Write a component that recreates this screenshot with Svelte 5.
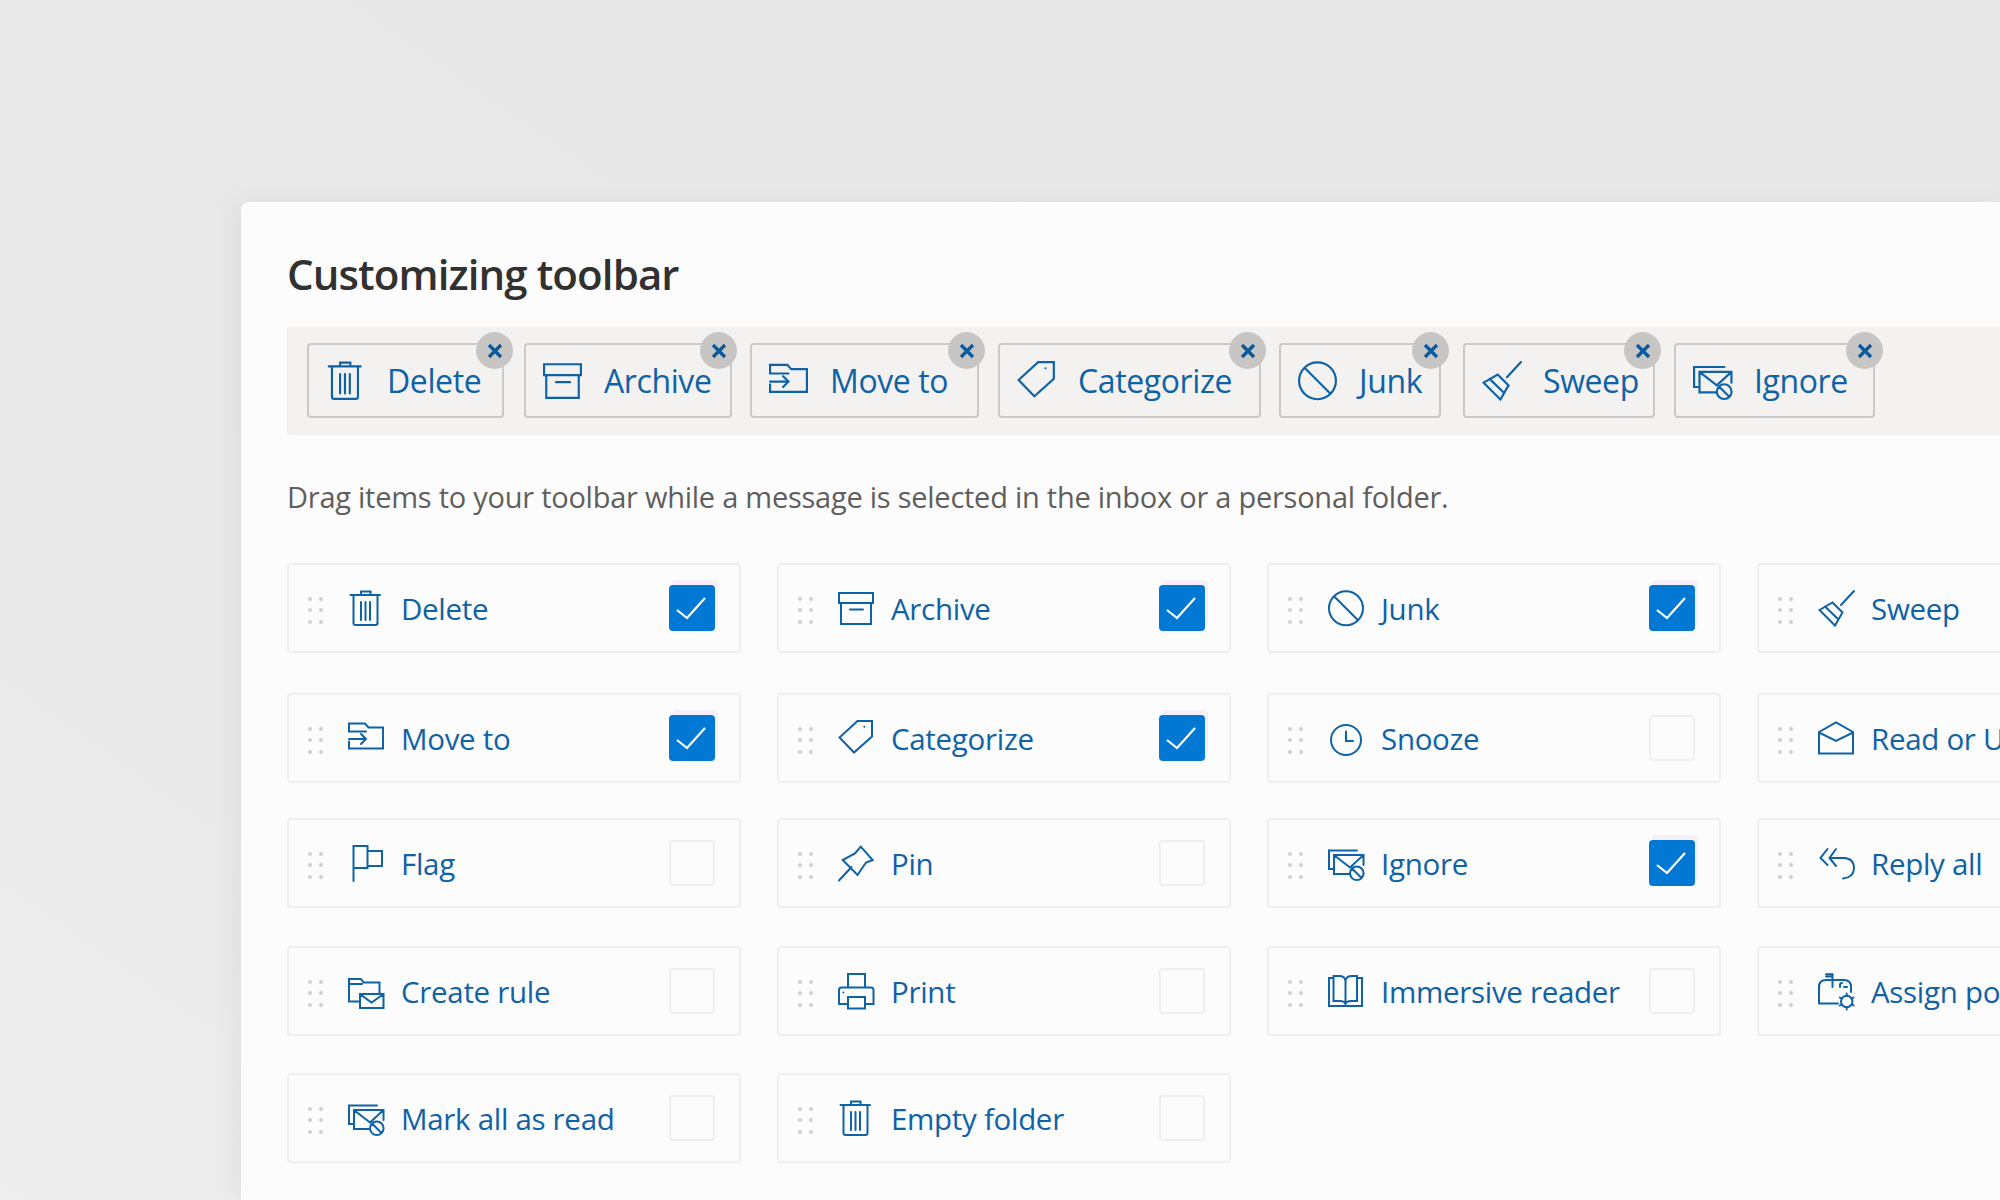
<script lang="ts">
    // all icons are drawn on a 36x36 box, stroke only
    const icons = {
        trash: 'M2.5 5H32M13 5V1.5H22.5V5M5.5 5V33Q5.5 35 7.5 35H27.5Q29.5 35 29.5 33V5M13 12V30M17.5 12V30M22 12V30',
        archive: 'M1 3H35V13H1ZM3 13V34H33V13M12 19.5H25',
        move: 'M1 21.5V28.5H35V7.5H20.5L17 3.5H1V11.5H18M1 19H18M13 14L18 19L13 24',
        tag: 'M16 32.5L1.5 17.5L19.5 1H34V16.5ZM26.3 6.8h.01',
        junk: 'M1 18.3A17 17 0 1 0 35 18.3A17 17 0 1 0 1 18.3ZM6 6.3L30 30.3',
        sweep: 'M36 1L23 15M1.5 20L14.5 12.5L24.5 22.5L17 35.5ZM7 16.5L20.5 29.5',
        ignore: 'M29 5.5H1V24H5M21 29H6V10H35.5V20M6.5 10.5L22 22.5L35 10.5M22 28.3A6.8 6.8 0 1 0 35.6 28.3A6.8 6.8 0 1 0 22 28.3ZM24 23.5L33.5 33',
        clock: 'M3 20A15 15 0 1 0 33 20A15 15 0 1 0 3 20ZM18 11.5V21H25',
        read: 'M1 12L18 2.5L35 12V33.5H1ZM1 12.5L18 21L35 12.5',
        flag: 'M5.5 36V1H19.5V23H5.5M19.5 6H34V21H19.5',
        pin: 'M1 35.5L13.5 22M22.7 1.7L34.7 15L28 17.5L19.5 30L4.7 15L17 8.5Z',
        reply: 'M9.5 4L2.5 13L9.5 20M18 4L11.5 13L18 21M11.5 13H26Q36 13.5 36 23.5Q35.5 32.5 25 33.5',
        rule: 'M12 28.5H1V6H13L15.5 9.5H31.5V21M1 11H14M12 21H35.5V35H12ZM12.5 21.5L23.5 29.5L35 21.5',
        print: 'M10 14V1H27V14M1 31V17Q1 14.5 3.5 14.5H33Q35.5 14.5 35.5 17V31H27M10 31H1M10 24H27V35.5H10ZM5.3 19.5h.01',
        book: 'M5 5H1V33H34V5H29.5M17.5 8Q18 3 24 3H29V28H23Q18.5 28 17.5 31Q16.5 28 12 28H5.5V3H11Q17 3 17.5 8V31',
        policy: 'M8 1.2H14M8 3.6H14M14.5 1V14M1 30V14Q1 7 8 7H26Q33 7 33 14V19M1 30.5H20M22 14V12Q22 10 24 10H24M26 14H29M23 28.5A5.7 5.7 0 1 0 34.4 28.5A5.7 5.7 0 1 0 23 28.5ZM28.7 20.5V23M28.7 34V36.5M21.8 24.5L24 25.8M33.4 31.2L35.6 32.5M21.8 32.5L24 31.2M33.4 25.8L35.6 24.5'
    };

    // left and gap values vary a little per chip in the design
    const toolbar = [
        { label: 'Delete', icon: 'trash', width: 197, gap: 20, badge: 11 },
        { label: 'Archive', icon: 'archive', width: 208, gap: 18, badge: 7 },
        { label: 'Move to', icon: 'move', width: 229, gap: 19, badge: 8 },
        { label: 'Categorize', icon: 'tag', width: 263, gap: 18, badge: 7 },
        { label: 'Junk', icon: 'junk', width: 162, gap: 22, badge: 10 },
        { label: 'Sweep', icon: 'sweep', width: 192, gap: 19, badge: 8 },
        { label: 'Ignore', icon: 'ignore', width: 201, gap: 0, badge: 10 }
    ];

    const items = [
        { label: 'Delete', icon: 'trash', on: true },
        { label: 'Archive', icon: 'archive', on: true },
        { label: 'Junk', icon: 'junk', on: true },
        { label: 'Sweep', icon: 'sweep', on: false },
        { label: 'Move to', icon: 'move', on: true },
        { label: 'Categorize', icon: 'tag', on: true },
        { label: 'Snooze', icon: 'clock', on: false },
        { label: 'Read or Unread', icon: 'read', on: false },
        { label: 'Flag', icon: 'flag', on: false },
        { label: 'Pin', icon: 'pin', on: false },
        { label: 'Ignore', icon: 'ignore', on: true },
        { label: 'Reply all', icon: 'reply', on: false },
        { label: 'Create rule', icon: 'rule', on: false },
        { label: 'Print', icon: 'print', on: false },
        { label: 'Immersive reader', icon: 'book', on: false },
        { label: 'Assign policy', icon: 'policy', on: false },
        { label: 'Mark all as read', icon: 'ignore', on: false },
        { label: 'Empty folder', icon: 'trash', on: false }
    ];
</script>

<div class="page">
    <section class="panel">
        <h1>Customizing toolbar</h1>

        <div class="toolbar">
            {#each toolbar as chip}
                <div class="chip" style="width: {chip.width}px; margin-right: {chip.gap}px;">
                    <svg class="icon chip-icon" viewBox="0 0 36 36"><path d={icons[chip.icon]} /></svg>
                    <span>{chip.label}</span>
                    <span class="remove" style="right: {-chip.badge}px;">
                        <svg viewBox="0 0 16 16"><path d="M2 2L14 14M14 2L2 14" /></svg>
                    </span>
                </div>
            {/each}
        </div>

        <p class="hint">Drag items to your toolbar while a message is selected in the inbox or a personal folder.</p>

        <div class="grid">
            {#each items as item}
                <div class="card">
                    <div class="grip">
                        {#each Array(6) as _}<i></i>{/each}
                    </div>
                    <svg class="icon" viewBox="0 0 36 36"><path d={icons[item.icon]} /></svg>
                    <span class="name">{item.label}</span>
                    <span class="box" class:on={item.on}>
                        {#if item.on}
                            <svg viewBox="0 0 46 46"><path d="M8 25L18 33L36 13" /></svg>
                        {/if}
                    </span>
                </div>
            {/each}
        </div>
    </section>
</div>

<style>
    :global(body) {
        margin: 0;
        background: #e9e9e9;
        overflow: hidden;
    }

    .page {
        width: 2000px;
        height: 1200px;
        padding: 202px 0 0 241px;
        box-sizing: border-box;
        overflow: hidden;
        background: linear-gradient(35deg, #eeeeee 0, #e9e9e9 22%, #e8e8e8 100%);
        font-family: "Open Sans", "Noto Sans", sans-serif;
    }

    .panel {
        height: 998px;
        padding-left: 46px;
        background: #fcfcfc;
        border-top-left-radius: 8px;
        box-shadow: -6px 0 24px rgba(0, 0, 0, 0.05);
        overflow: hidden;
    }

    h1 {
        margin: 0;
        height: 125px;
        padding-top: 46px;
        box-sizing: border-box;
        font-size: 42px;
        line-height: 52px;
        font-weight: 600;
        letter-spacing: -0.9px;
        color: #323130;
    }

    .toolbar {
        display: flex;
        width: 1713px;
        height: 108px;
        padding: 16px 0 0 20px;
        box-sizing: border-box;
        background: #f3f2f1;
        border-radius: 3px 0 0 3px;
    }

    .chip {
        position: relative;
        display: flex;
        align-items: center;
        flex: none;
        height: 75px;
        padding-left: 17px;
        box-sizing: border-box;
        border: 2.5px solid #cbc9c7;
        border-radius: 4px;
        font-size: 32px;
        letter-spacing: -0.4px;
        color: #0f62a5;
    }

    .icon {
        flex: none;
        width: 36px;
        height: 36px;
        overflow: visible;
        fill: none;
        stroke: #0f62a5;
        stroke-width: 2;
        stroke-linecap: round;
    }

    .chip-icon {
        width: 39px;
        height: 39px;
        margin-right: 22px;
    }

    .remove {
        position: absolute;
        top: -13px;
        display: flex;
        align-items: center;
        justify-content: center;
        width: 37px;
        height: 37px;
        border-radius: 50%;
        background: #c8c6c4;
    }

    .remove svg {
        width: 16px;
        height: 16px;
        fill: none;
        stroke: #0b5a9e;
        stroke-width: 3.4;
    }

    .hint {
        margin: 0;
        height: 128px;
        padding-top: 42px;
        box-sizing: border-box;
        font-size: 29px;
        line-height: 40px;
        letter-spacing: -0.25px;
        color: #605e5c;
    }

    .grid {
        display: grid;
        grid-template-columns: repeat(4, 454px);
        grid-template-rows: 130px 125px 128px 127px 90px;
        column-gap: 36px;
        align-items: start;
    }

    .card {
        display: flex;
        align-items: center;
        height: 90px;
        padding: 0 24px 0 19px;
        box-sizing: border-box;
        border: 2px solid #f0efee;
        border-radius: 4px;
        font-size: 29.5px;
        letter-spacing: -0.3px;
        color: #0f62a5;
    }

    .grip {
        display: grid;
        grid-template-columns: 4px 4px;
        grid-auto-rows: 4px;
        gap: 7.5px 7px;
        flex: none;
        margin: 4px 25px 0 0;
    }

    .grip i {
        border-radius: 50%;
        background: #cfcfcf;
    }

    .name {
        margin-left: 17px;
        white-space: nowrap;
    }

    .box {
        flex: none;
        width: 46px;
        height: 46px;
        margin-left: auto;
        box-sizing: border-box;
        border: 2px solid #f0efee;
        border-radius: 4px;
    }

    .box.on {
        border: 0;
        background: #0078d4;
        box-shadow: 3px -5px 0 #f5f0f8;
    }

    .box svg {
        display: block;
        fill: none;
        stroke: #ffffff;
        stroke-width: 2.2;
    }
</style>
